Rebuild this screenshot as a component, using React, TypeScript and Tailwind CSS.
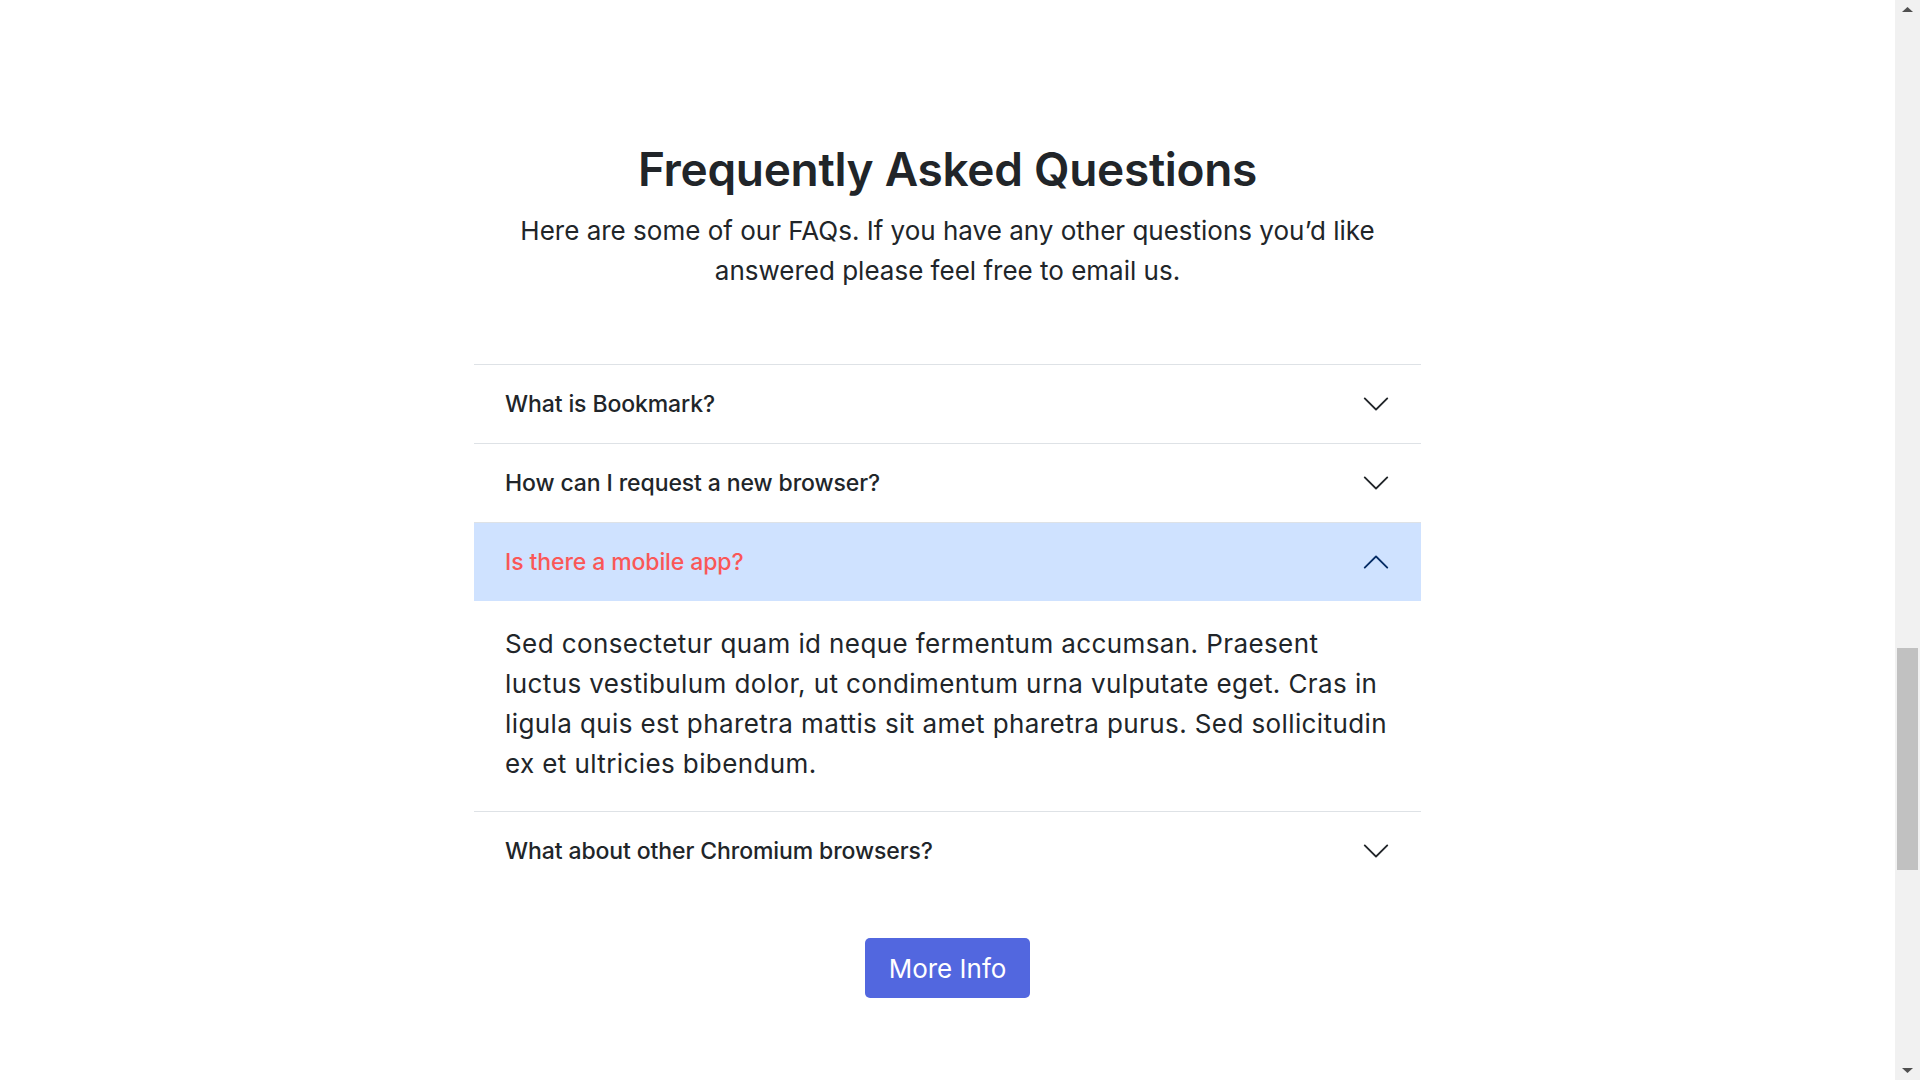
import React, { useState } from 'react';

const answerText =
  "Sed consectetur quam id neque fermentum accumsan. Praesent luctus vestibulum dolor, ut condimentum urna vulputate eget. Cras in ligula quis est pharetra mattis sit amet pharetra purus. Sed sollicitudin ex et ultricies bibendum.";

const faqs = [
  { question: "What is Bookmark?", answer: answerText },
  { question: "How can I request a new browser?", answer: answerText },
  { question: "Is there a mobile app?", answer: answerText },
  { question: "What about other Chromium browsers?", answer: answerText }
];

function Chevron({ open }: { open: boolean }) {
  return (
    <svg
      width="30"
      height="30"
      viewBox="0 0 16 16"
      fill="currentColor"
      className={"shrink-0 " + (open ? "rotate-180 text-[#052c65]" : "text-[#212529]")}
    >
      <path
        fillRule="evenodd"
        d="M1.646 4.646a.5.5 0 0 1 .708 0L8 10.293l5.646-5.647a.5.5 0 0 1 .708.708l-6 6a.5.5 0 0 1-.708 0l-6-6a.5.5 0 0 1 0-.708z"
      />
    </svg>
  );
}

function Scrollbar() {
  return (
    <aside className="flex h-screen w-[25px] shrink-0 flex-col items-center bg-[#f1f1f1]">
      <svg width="11" height="17" viewBox="0 0 11 17" className="shrink-0">
        <polygon points="0,12 5.5,7 11,12" fill="#505050" />
      </svg>
      <div className="mt-[631px] h-[222px] w-[21px] bg-[#c1c1c1]" />
      <div className="flex-1" />
      <svg width="11" height="17" viewBox="0 0 11 17" className="shrink-0">
        <polygon points="0,5 5.5,10 11,5" fill="#505050" />
      </svg>
    </aside>
  );
}

export default function App() {
  const [openIndex, setOpenIndex] = useState<number | null>(2);

  const toggle = (i: number) => setOpenIndex((prev) => (prev === i ? null : i));

  return (
    <div
      className="flex h-screen overflow-hidden bg-white text-[#212529]"
      style={{ fontFamily: "Inter, 'Noto Sans', sans-serif" }}
    >
      <main className="flex-1 overflow-hidden">
        <section className="flex flex-col items-center pt-[141px]">
          <h1 className="text-[46px] leading-[56px] font-semibold tracking-[-0.3px]">
            Frequently Asked Questions
          </h1>
          <p className="mt-[14px] max-w-[920px] text-center text-[26px] leading-[40px]">
            Here are some of our FAQs. If you have any other questions you’d like answered please feel free to email us.
          </p>

          <div className="mt-[73px] w-[947px]">
            {faqs.map((faq, i) => {
              const open = openIndex === i;
              return (
                <div key={faq.question} className="border-t border-[#dee2e6]">
                  <button
                    type="button"
                    onClick={() => toggle(i)}
                    className={
                      "flex h-[78px] w-full items-center justify-between pl-[31px] pr-[30px] text-left " +
                      (open ? "bg-[#cfe2ff] text-[#fa5757]" : "text-[#212529]")
                    }
                  >
                    <span className="text-[23px] font-medium tracking-[-0.1px]">{faq.question}</span>
                    <Chevron open={open} />
                  </button>
                  {open && (
                    <p className="pl-[31px] pr-[20px] pt-[23px] pb-[27px] text-[26px] leading-[40px] tracking-[0.4px] text-[#212529]">
                      {faq.answer}
                    </p>
                  )}
                </div>
              );
            })}
          </div>

          <button
            type="button"
            className="mt-[48px] h-[60px] w-[165px] rounded-[5px] bg-[#5267df] text-[26px] text-white"
          >
            More Info
          </button>
        </section>
      </main>
      <Scrollbar />
    </div>
  );
}
